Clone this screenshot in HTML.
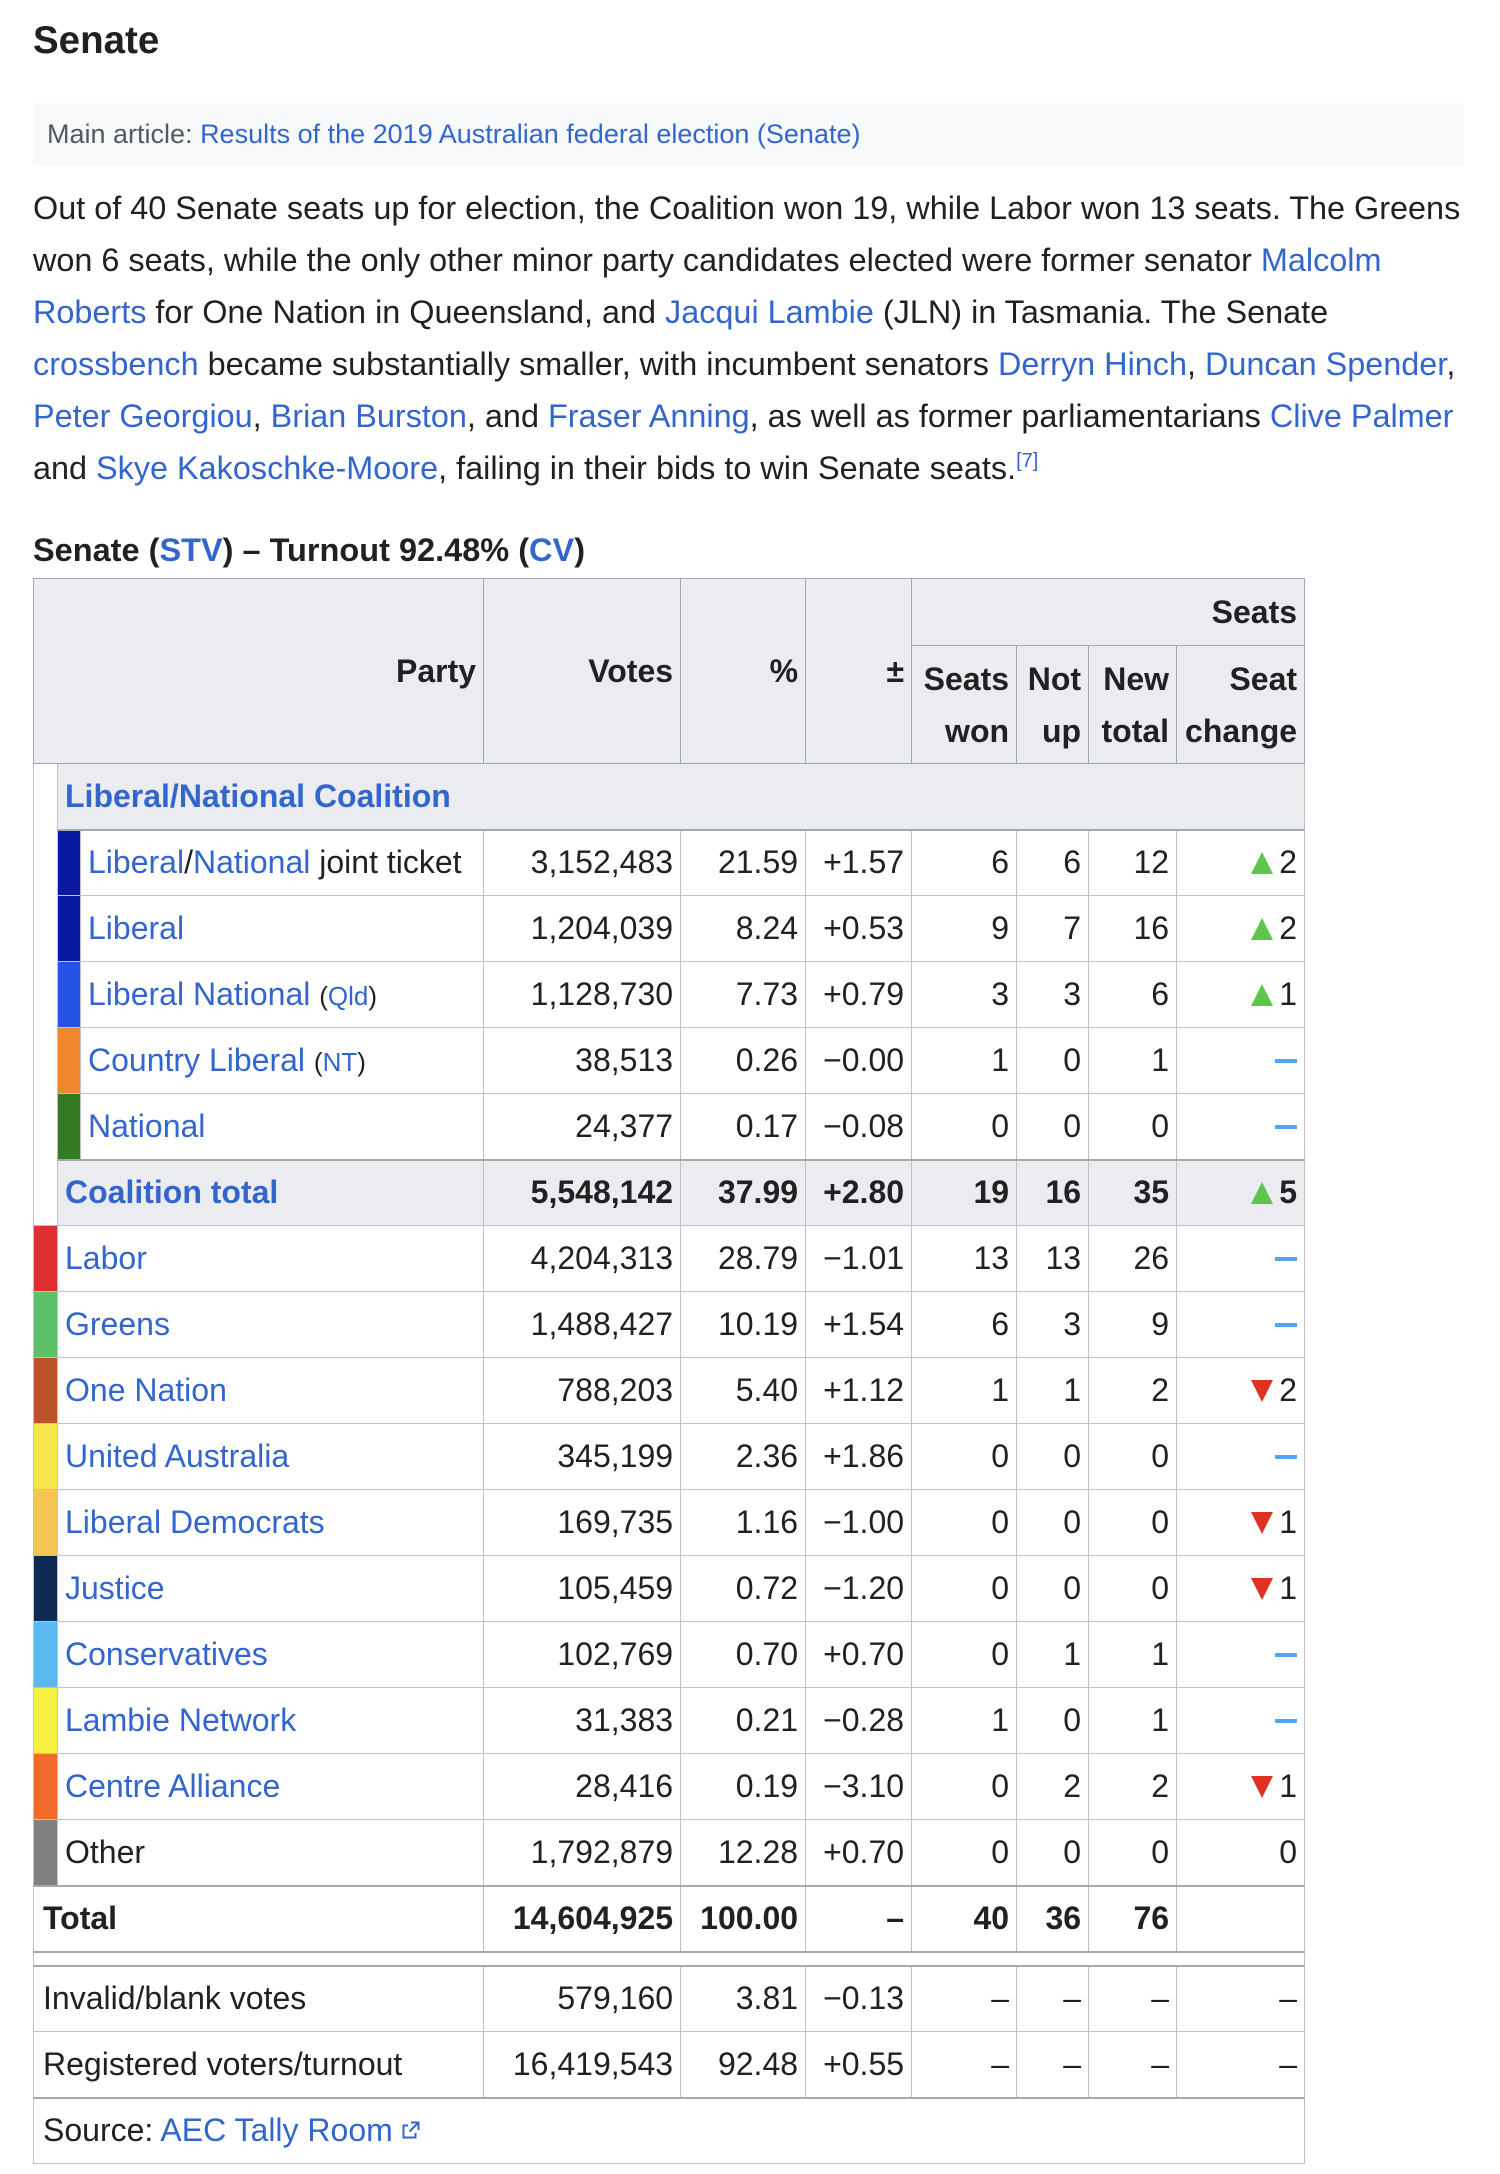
<!DOCTYPE html>
<html><head><meta charset="utf-8">
<style>
*{box-sizing:border-box}
body{margin:0;width:1500px;height:2174px;background:#fff;font-family:"Liberation Sans",Arial,sans-serif;color:#202122;position:relative;overflow:hidden}
a{color:#3366cc;text-decoration:none}
h2{position:absolute;left:33px;top:18px;margin:0;font-size:38.5px;line-height:46px;font-weight:bold}
.hat{position:absolute;left:33px;top:103px;width:1431px;height:63px;background:#f8f9fa;font-size:27px;line-height:63px;padding-left:14px;color:#54595d}
.p{position:absolute;left:33px;top:182px;font-size:32.4px;line-height:52px;white-space:nowrap}
sup{font-size:20px;line-height:0;vertical-align:super}
.cap{position:absolute;left:33px;top:524px;font-size:32.5px;line-height:52px;font-weight:bold;white-space:nowrap}
table{position:absolute;left:33px;top:578px;border-collapse:collapse;table-layout:fixed;width:1271px;font-size:32px}
td,th{border:1px solid #bfc3c8;padding:0 7px;height:66px;white-space:nowrap;text-align:right}
th{background:#eaecf0;font-weight:bold;border-color:#a2a9b1;line-height:52px}
.l{text-align:left}
.g{background:#eaecf0}
.b{font-weight:bold}
.bar{padding:0}
.thick td{border-bottom:2px solid #a2a9b1}
.up{display:inline-block;width:0;height:0;border-left:11px solid transparent;border-right:11px solid transparent;border-bottom:22px solid #5dc54b;margin-right:6px;vertical-align:-1px}
.dn{display:inline-block;width:0;height:0;border-left:11px solid transparent;border-right:11px solid transparent;border-top:22px solid #e03222;margin-right:6px;vertical-align:-1px}
.ds{display:inline-block;width:22px;height:4px;background:#55a6f2;vertical-align:8px}
small{font-size:26px}
</style></head><body>
<h2>Senate</h2>
<div class="hat">Main article: <a>Results of the 2019 Australian federal election (Senate)</a></div>
<div class="p">Out of 40 Senate seats up for election, the Coalition won 19, while Labor won 13 seats. The Greens<br>won 6 seats, while the only other minor party candidates elected were former senator <a>Malcolm</a><br><a>Roberts</a> for One Nation in Queensland, and <a>Jacqui Lambie</a> (JLN) in Tasmania. The Senate<br><a>crossbench</a> became substantially smaller, with incumbent senators <a>Derryn Hinch</a>, <a>Duncan Spender</a>,<br><a>Peter Georgiou</a>, <a>Brian Burston</a>, and <a>Fraser Anning</a>, as well as former parliamentarians <a>Clive Palmer</a><br>and <a>Skye Kakoschke-Moore</a>, failing in their bids to win Senate seats.<sup><a>[7]</a></sup></div>
<div class="cap">Senate (<a>STV</a>) – Turnout 92.48% (<a>CV</a>)</div>
<table>
<colgroup><col style="width:24px"><col style="width:23px"><col style="width:403px"><col style="width:197px"><col style="width:125px"><col style="width:106px"><col style="width:105px"><col style="width:72px"><col style="width:88px"><col style="width:128px"></colgroup>
<tr><th colspan="3" rowspan="2" style="height:185px">Party</th><th rowspan="2">Votes</th><th rowspan="2">%</th><th rowspan="2">±</th><th colspan="4" style="height:67px">Seats</th></tr>
<tr><th style="height:118px">Seats<br>won</th><th>Not<br>up</th><th>New<br>total</th><th>Seat<br>change</th></tr>
<tr class="thick"><td rowspan="7" style="border-bottom:1px solid #bfc3c8;background:#fff"></td><td colspan="9" class="l g b"><a>Liberal/National Coalition</a></td></tr>
<tr><td class="bar" style="background:#0a1aa0"></td><td class="l"><a>Liberal</a>/<a>National</a> joint ticket</td><td>3,152,483</td><td>21.59</td><td>+1.57</td><td>6</td><td>6</td><td>12</td><td><span class="up"></span>2</td></tr>
<tr><td class="bar" style="background:#0a1aa0"></td><td class="l"><a>Liberal</a></td><td>1,204,039</td><td>8.24</td><td>+0.53</td><td>9</td><td>7</td><td>16</td><td><span class="up"></span>2</td></tr>
<tr><td class="bar" style="background:#2453e6"></td><td class="l"><a>Liberal National</a> <small>(<a>Qld</a>)</small></td><td>1,128,730</td><td>7.73</td><td>+0.79</td><td>3</td><td>3</td><td>6</td><td><span class="up"></span>1</td></tr>
<tr><td class="bar" style="background:#f0872e"></td><td class="l"><a>Country Liberal</a> <small>(<a>NT</a>)</small></td><td>38,513</td><td>0.26</td><td>−0.00</td><td>1</td><td>0</td><td>1</td><td><span class="ds"></span></td></tr>
<tr class="thick"><td class="bar" style="background:#347a22"></td><td class="l"><a>National</a></td><td>24,377</td><td>0.17</td><td>−0.08</td><td>0</td><td>0</td><td>0</td><td><span class="ds"></span></td></tr>
<tr class="g b"><td colspan="2" class="l"><a>Coalition total</a></td><td>5,548,142</td><td>37.99</td><td>+2.80</td><td>19</td><td>16</td><td>35</td><td><span class="up"></span>5</td></tr>
<tr><td class="bar" style="background:#de3030"></td><td colspan="2" class="l"><a>Labor</a></td><td>4,204,313</td><td>28.79</td><td>−1.01</td><td>13</td><td>13</td><td>26</td><td><span class="ds"></span></td></tr>
<tr><td class="bar" style="background:#5bc066"></td><td colspan="2" class="l"><a>Greens</a></td><td>1,488,427</td><td>10.19</td><td>+1.54</td><td>6</td><td>3</td><td>9</td><td><span class="ds"></span></td></tr>
<tr><td class="bar" style="background:#bd5229"></td><td colspan="2" class="l"><a>One Nation</a></td><td>788,203</td><td>5.40</td><td>+1.12</td><td>1</td><td>1</td><td>2</td><td><span class="dn"></span>2</td></tr>
<tr><td class="bar" style="background:#f6e64a"></td><td colspan="2" class="l"><a>United Australia</a></td><td>345,199</td><td>2.36</td><td>+1.86</td><td>0</td><td>0</td><td>0</td><td><span class="ds"></span></td></tr>
<tr><td class="bar" style="background:#f5c455"></td><td colspan="2" class="l"><a>Liberal Democrats</a></td><td>169,735</td><td>1.16</td><td>−1.00</td><td>0</td><td>0</td><td>0</td><td><span class="dn"></span>1</td></tr>
<tr><td class="bar" style="background:#0d2a55"></td><td colspan="2" class="l"><a>Justice</a></td><td>105,459</td><td>0.72</td><td>−1.20</td><td>0</td><td>0</td><td>0</td><td><span class="dn"></span>1</td></tr>
<tr><td class="bar" style="background:#5cb8f2"></td><td colspan="2" class="l"><a>Conservatives</a></td><td>102,769</td><td>0.70</td><td>+0.70</td><td>0</td><td>1</td><td>1</td><td><span class="ds"></span></td></tr>
<tr><td class="bar" style="background:#f8ef42"></td><td colspan="2" class="l"><a>Lambie Network</a></td><td>31,383</td><td>0.21</td><td>−0.28</td><td>1</td><td>0</td><td>1</td><td><span class="ds"></span></td></tr>
<tr><td class="bar" style="background:#ee6b2c"></td><td colspan="2" class="l"><a>Centre Alliance</a></td><td>28,416</td><td>0.19</td><td>−3.10</td><td>0</td><td>2</td><td>2</td><td><span class="dn"></span>1</td></tr>
<tr class="thick"><td class="bar" style="background:#808080"></td><td colspan="2" class="l">Other</td><td>1,792,879</td><td>12.28</td><td>+0.70</td><td>0</td><td>0</td><td>0</td><td>0</td></tr>
<tr class="thick b"><td colspan="3" class="l" style="padding-left:9px">Total</td><td>14,604,925</td><td>100.00</td><td>–</td><td>40</td><td>36</td><td>76</td><td></td></tr>
<tr><td colspan="10" style="height:14px;border-bottom:2px solid #a2a9b1;padding:0"></td></tr>
<tr><td colspan="3" class="l" style="padding-left:9px">Invalid/blank votes</td><td>579,160</td><td>3.81</td><td>−0.13</td><td>–</td><td>–</td><td>–</td><td>–</td></tr>
<tr class="thick"><td colspan="3" class="l" style="padding-left:9px">Registered voters/turnout</td><td>16,419,543</td><td>92.48</td><td>+0.55</td><td>–</td><td>–</td><td>–</td><td>–</td></tr>
<tr><td colspan="10" class="l" style="padding-left:9px">Source: <a>AEC Tally Room <svg width="18" height="18" viewBox="0 0 12 12" style="vertical-align:2px"><path d="M6 1h5v5M11 1L5 7M9 8v3H1V3h3" fill="none" stroke="#3366cc" stroke-width="1.3"/></svg></a></td></tr>
</table>
</body></html>
